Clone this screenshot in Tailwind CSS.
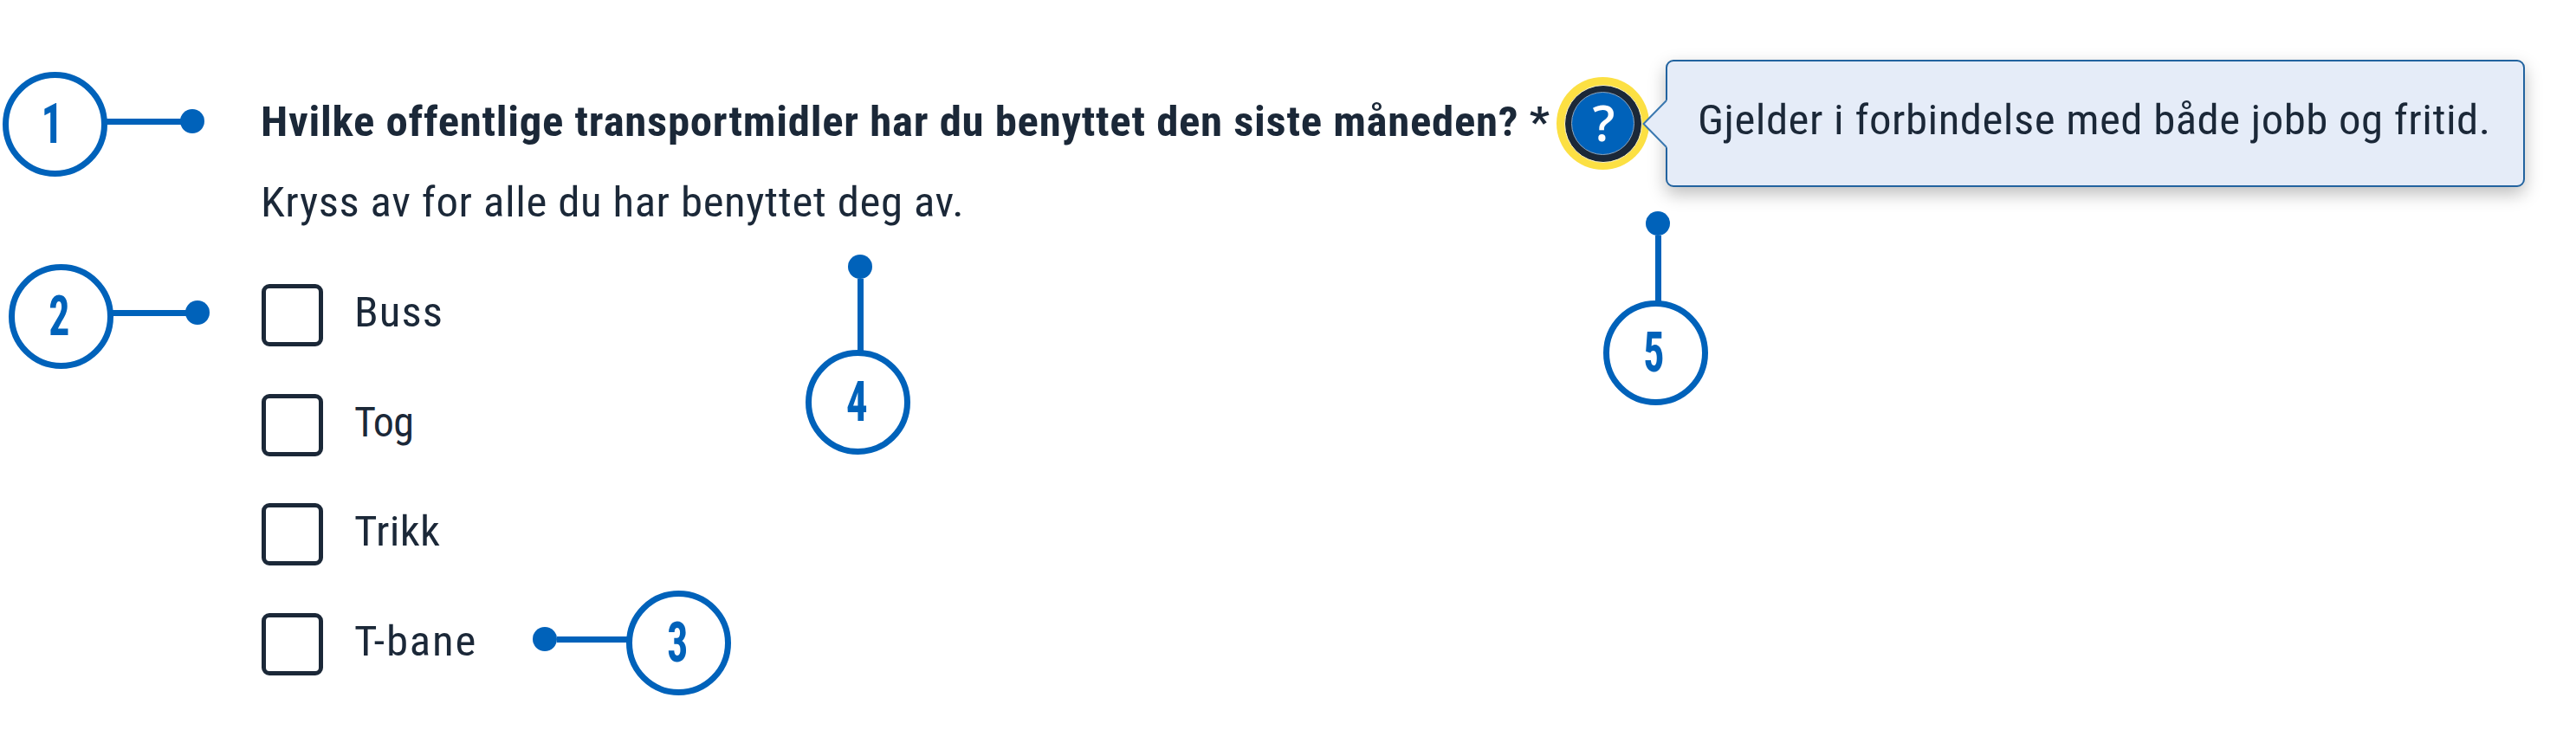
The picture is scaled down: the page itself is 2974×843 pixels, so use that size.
<!DOCTYPE html>
<html lang="no">
<head>
<meta charset="utf-8">
<title>Avkrysningsbokser</title>
<script src="https://cdn.jsdelivr.net/npm/@tailwindcss/browser@4"></script>
</head>
<body class="bg-white">
<main class="relative h-[843px] w-[2974px] overflow-hidden bg-white pt-[89px] pl-[300.5px] font-['Roboto_Condensed',Roboto,sans-serif] text-[48px] leading-[64px] text-[#1b2838]">

  <fieldset>
    <div class="flex h-[107px] items-center">
      <legend class="w-[1496.5px] origin-left scale-x-[1.06] pb-1 font-bold whitespace-nowrap tracking-[0.660px]">Hvilke offentlige transportmidler har du benyttet den siste måneden? *</legend>
      <div class="relative flex size-[107px] shrink-0 items-center justify-center rounded-full bg-[#fce043]">
        <button class="flex size-[90px] items-center justify-center rounded-full border border-[#fff6c9] bg-[#1b2838]">
          <span class="flex size-[73px] items-center justify-center rounded-full border border-[#8fa6bd] bg-[#0062ba] pb-0.5 pl-0.5 font-['Open_Sans',sans-serif] text-[57px] leading-none font-semibold text-white">?</span>
        </button>
        <div class="absolute top-[-20px] left-[125.5px] flex h-[147px] w-[992px] items-center rounded-[9px] border-2 border-[#22639f] bg-[#e5ecf8] pb-2 pl-[35.5px] whitespace-nowrap shadow-[0_8px_20px_rgba(0,0,0,0.26)]">
          <span class="origin-left scale-x-[1.06] tracking-[0.450px]">Gjelder i forbindelse med både jobb og fritid.</span>
          <svg class="absolute top-[43px] left-[-29px] h-[58px] w-[31px]" viewBox="0 0 31 58" fill="none">
            <path d="M31 0.500L28 2L1.500 29L28 56L31 57.500Z" fill="#e5ecf8"/>
            <path d="M28 2L1.500 29L28 56" stroke="#3a78b0" stroke-width="2"/>
          </svg>
        </div>
      </div>
    </div>

    <p class="mt-[6px] origin-left scale-x-[1.06] tracking-[0.560px]">Kryss av for alle du har benyttet deg av.</p>

    <div class="mt-[62px] ml-[1.500px] flex flex-col gap-[54.600px]">
      <label class="flex h-[72px] items-center gap-[36px]"><span class="h-[72px] w-[71px] rounded-[9px] border-5 border-[#1b2838]"></span><span class="origin-left scale-x-[1.06] pb-1.5 tracking-[1px]">Buss</span></label>
      <label class="flex h-[72px] items-center gap-[36px]"><span class="h-[72px] w-[71px] rounded-[9px] border-5 border-[#1b2838]"></span><span class="pb-1.5 tracking-[-0.800px]">Tog</span></label>
      <label class="flex h-[72px] items-center gap-[36px]"><span class="h-[72px] w-[71px] rounded-[9px] border-5 border-[#1b2838]"></span><span class="origin-left scale-x-[1.06] pb-1.5 tracking-[0.300px]">Trikk</span></label>
      <label class="flex h-[72px] items-center gap-[36px]"><span class="h-[72px] w-[71px] rounded-[9px] border-5 border-[#1b2838]"></span><span class="origin-left scale-x-[1.06] pb-1.5 tracking-[1.700px]">T-bane</span></label>
    </div>
  </fieldset>

  <!-- Numbered annotation pins -->
  <div class="absolute top-[82.500px] left-[2.500px] flex items-center text-[64.500px] font-bold text-[#0062ba]">
    <span class="flex size-[121px] items-center justify-center rounded-full border-7 border-[#0062ba] pr-[5px]"><span class="scale-x-[0.78]">1</span></span>
    <span class="-mt-[6px] -ml-px h-[7px] w-[86px] bg-[#0062ba]"></span>
    <span class="-mt-[6px] -ml-px size-[28px] rounded-full bg-[#0062ba]"></span>
  </div>
  <div class="absolute top-[304.500px] left-[9.500px] flex items-center text-[64.500px] font-bold text-[#0062ba]">
    <span class="flex size-[121px] items-center justify-center rounded-full border-7 border-[#0062ba] pr-[4px]"><span class="scale-x-[0.74]">2</span></span>
    <span class="-mt-[8px] -ml-px h-[7px] w-[85px] bg-[#0062ba]"></span>
    <span class="-mt-[8px] -ml-px size-[28px] rounded-full bg-[#0062ba]"></span>
  </div>
  <div class="absolute top-[681.500px] left-[614.500px] flex items-center text-[64.500px] font-bold text-[#0062ba]">
    <span class="-mt-[8px] size-[28px] rounded-full bg-[#0062ba]"></span>
    <span class="-mt-[8px] -mr-px h-[7px] w-[81.500px] bg-[#0062ba]"></span>
    <span class="flex size-[121px] items-center justify-center rounded-full border-7 border-[#0062ba] pr-[3px]"><span class="scale-x-[0.74]">3</span></span>
  </div>
  <div class="absolute top-[294px] left-[929.500px] flex flex-col items-center text-[64.500px] font-bold text-[#0062ba]">
    <span class="ml-[6px] size-[28px] rounded-full bg-[#0062ba]"></span>
    <span class="-mb-px ml-[6px] h-[82.500px] w-[7px] bg-[#0062ba]"></span>
    <span class="flex size-[121px] items-center justify-center rounded-full border-7 border-[#0062ba] pr-[2px]"><span class="scale-x-[0.76]">4</span></span>
  </div>
  <div class="absolute top-[244px] left-[1850.500px] flex flex-col items-center text-[64.500px] font-bold text-[#0062ba]">
    <span class="ml-[6px] size-[28px] rounded-full bg-[#0062ba]"></span>
    <span class="-mb-px ml-[6px] h-[75.500px] w-[7px] bg-[#0062ba]"></span>
    <span class="flex size-[121px] items-center justify-center rounded-full border-7 border-[#0062ba] pr-[3px]"><span class="scale-x-[0.74]">5</span></span>
  </div>
</main>
</body>
</html>
